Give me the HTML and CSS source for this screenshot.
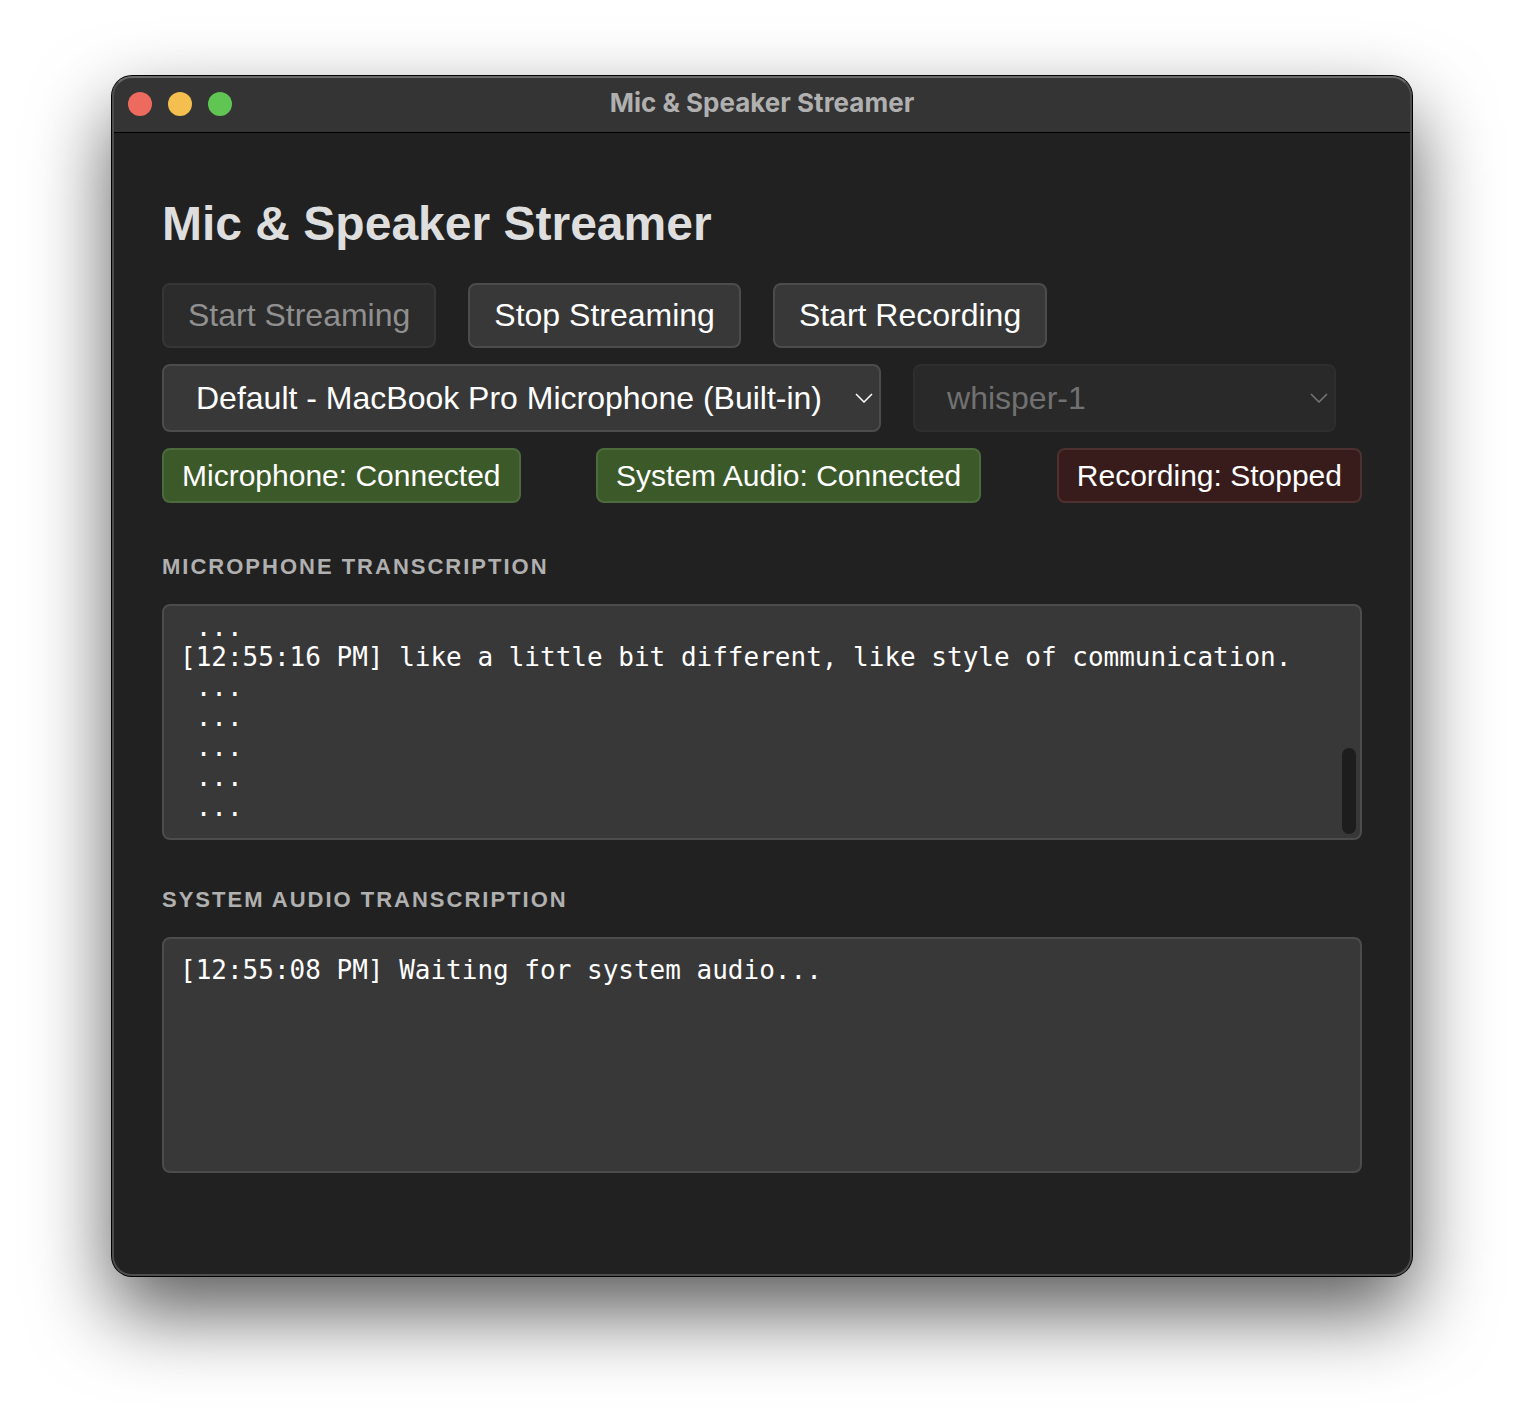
FILE: index.html
```html
<!DOCTYPE html>
<html lang="en">
<head>
<meta charset="utf-8">
<title>Mic &amp; Speaker Streamer</title>
<link rel="stylesheet" href="styles.css">
</head>
<body>
<div class="window">
  <header class="titlebar">
    <div class="lights">
      <button class="light close" type="button" aria-label="Close"></button>
      <button class="light minimize" type="button" aria-label="Minimize"></button>
      <button class="light zoom" type="button" aria-label="Zoom"></button>
    </div>
    <span class="window-title">Mic &amp; Speaker Streamer</span>
  </header>
  <main class="content">
    <h1>Mic &amp; Speaker Streamer</h1>
    <div class="controls">
      <div class="buttons">
        <button class="btn" type="button" disabled>Start Streaming</button>
        <button class="btn" type="button">Stop Streaming</button>
        <button class="btn" type="button">Start Recording</button>
      </div>
      <div class="selects">
        <div class="picker device">
          <select aria-label="Microphone"><option>Default - MacBook Pro Microphone (Built-in)</option></select>
          <svg class="chevron" viewBox="0 0 18 10" aria-hidden="true"><path d="M1 1l8 8 8-8"/></svg>
        </div>
        <div class="picker model">
          <select aria-label="Model" disabled><option>whisper-1</option></select>
          <svg class="chevron" viewBox="0 0 18 10" aria-hidden="true"><path d="M1 1l8 8 8-8"/></svg>
        </div>
      </div>
      <div class="statuses">
        <div class="status on">Microphone: Connected</div>
        <div class="status on">System Audio: Connected</div>
        <div class="status off">Recording: Stopped</div>
      </div>
    </div>
    <section>
      <h2>Microphone Transcription</h2>
      <div class="log latest">
        <pre> ...
[12:55:16 PM] like a little bit different, like style of communication.
 ...
 ...
 ...
 ...
 ...</pre>
        <div class="thumb"></div>
      </div>
    </section>
    <section>
      <h2>System Audio Transcription</h2>
      <div class="log">
        <pre>[12:55:08 PM] Waiting for system audio...</pre>
      </div>
    </section>
  </main>
</div>
</body>
</html>
```
FILE: styles.css
```css
* {
  box-sizing: border-box;
}

body {
  margin: 0;
  padding: 76px 112px 148px;
  background: #fff;
  color: #fff;
  font-family: "Liberation Sans", Arial, sans-serif;
}

.window {
  position: relative;
  min-height: calc(100vh - 224px);
  border-radius: 20px;
  background: #212121;
  box-shadow: 0 0 0 1px #000, 0 36px 80px rgba(0, 0, 0, 0.65);
}

/* light rim along the inside edge of the window */
.window::after {
  content: "";
  position: absolute;
  inset: 0;
  border: 2px solid #4d4d4d;
  border-top-color: #6a6a6a;
  border-radius: 20px;
  pointer-events: none;
}

.titlebar {
  display: grid;
  grid-template-columns: 1fr auto 1fr;
  align-items: center;
  height: 57px;
  padding: 0 16px;
  border-bottom: 1px solid #000;
  border-radius: 20px 20px 0 0;
  background: #343434;
}

.lights {
  display: flex;
  gap: 16px;
}

.light {
  width: 24px;
  height: 24px;
  padding: 0;
  border: 0;
  border-radius: 50%;
}

.close { background: #ed6a5e; }
.minimize { background: #f5bf4f; }
.zoom { background: #61c554; }

.window-title {
  padding-bottom: 2px;
  color: #b0b0b0;
  font: 700 26px/32px Inter, sans-serif;
}

.content {
  padding: 63px 50px 100px;
}

h1 {
  margin: 0 0 31px;
  color: #dedede;
  font-size: 48px;
  line-height: 56px;
}

.controls {
  display: flex;
  flex-direction: column;
  gap: 16px;
  margin-bottom: 51px;
}

.buttons,
.selects {
  display: flex;
  gap: 32px;
}

.selects {
  padding-right: 26px;
}

.btn,
.picker select {
  border: 2px solid #4c4c4c;
  border-radius: 8px;
  background: #383838;
  color: #fff;
  font: inherit;
  font-size: 32px;
}

.btn {
  padding: 12px 24px;
  line-height: 37px;
}

.btn:disabled {
  border-color: #363636;
  background: #2c2c2c;
  color: #909090;
}

.picker {
  position: relative;
  min-width: 0;
  color: #fff;
}

.device { flex: 17 1 0; }
.model { flex: 10 1 0; color: #777; }

.picker select {
  display: block;
  width: 100%;
  height: 68px;
  padding: 0 32px;
  appearance: none;
}

.picker select:disabled {
  border-color: #2e2e2e;
  background: #292929;
  color: #717171;
  opacity: 1;
}

.chevron {
  position: absolute;
  top: 29px;
  right: 8px;
  width: 18px;
  height: 10px;
  fill: none;
  stroke: currentColor;
  stroke-width: 1.5;
  pointer-events: none;
}

.statuses {
  display: flex;
  justify-content: space-between;
}

.status {
  padding: 8px 18px;
  border: 2px solid;
  border-radius: 8px;
  font-size: 30px;
  line-height: 35px;
}

.on {
  border-color: #4c6b3c;
  background: #3c592a;
}

.off {
  border-color: #4e3030;
  background: #381c1c;
}

section + section {
  margin-top: 47px;
}

h2 {
  margin: 0 0 24px;
  color: #b0b0b0;
  font-size: 22px;
  line-height: 26px;
  letter-spacing: 2px;
  text-transform: uppercase;
}

.log {
  position: relative;
  display: flex;
  flex-direction: column;
  height: 236px;
  padding: 16px;
  overflow: hidden;
  border: 2px solid #4c4c4c;
  border-radius: 8px;
  background: #383838;
}

/* keeps the newest line at the bottom */
.latest {
  justify-content: flex-end;
}

.log pre {
  margin: 0;
  font: 26px/30px "DejaVu Sans Mono", monospace;
}

.thumb {
  position: absolute;
  right: 4px;
  bottom: 4px;
  width: 14px;
  height: 86px;
  border-radius: 7px;
  background: #1d1d1d;
}
```
